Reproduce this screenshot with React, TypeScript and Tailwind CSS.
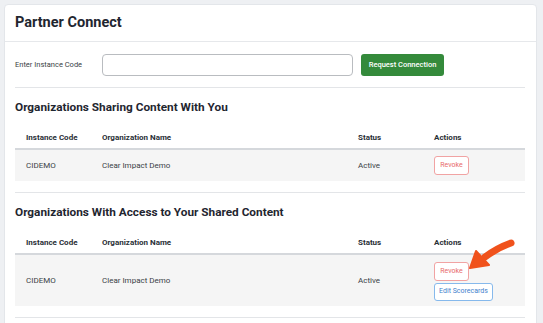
import React from "react";

type Row = { code: string; name: string; status: string };

const rows: Row[] = [{ code: "CIDEMO", name: "Clear Impact Demo", status: "Active" }];

function TableHead() {
  return (
    <div className="flex h-[23px] items-center border-b-2 border-[#d5d8dc] text-[8px] font-bold text-[#2a2f36]">
      <div className="w-[87px] pl-[11px]">Instance Code</div>
      <div className="w-[256px]">Organization Name</div>
      <div className="w-[76px]">Status</div>
      <div>Actions</div>
    </div>
  );
}

function RevokeButton() {
  return (
    <button className="flex h-[19px] w-[35px] items-center justify-center rounded-[3px] border border-[#f1a3a3] bg-white text-[7px] text-[#e86a6a]">
      Revoke
    </button>
  );
}

export default function App() {
  return (
    <div
      className="h-[323px] w-[543px] overflow-hidden bg-[#eef0f3] pl-[4px] pt-[4px]"
      style={{ fontFamily: "Roboto, 'Noto Sans', sans-serif" }}
    >
      <div className="relative h-[340px] w-[533px] rounded-[4px] border border-[#e3e6ea] bg-white">
        {/* Header */}
        <div className="flex h-[37px] items-center border-b border-[#e6e8eb] pl-[10px]">
          <h1 className="text-[14.5px] font-bold text-[#1f2630]">Partner Connect</h1>
        </div>

        <div className="pl-[10px] pr-[11px]">
          {/* Request connection */}
          <div className="flex h-[46px] items-center border-b border-[#e3e5e8]">
            <label className="w-[87px] text-[7.5px] text-[#3a3f46]">Enter Instance Code</label>
            <input className="h-[22px] w-[251px] rounded-[4px] border border-[#b9bcc0] bg-white" />
            <button className="ml-[8px] flex h-[22px] w-[83px] items-center justify-center rounded-[3px] bg-[#348a3b] text-[7.5px] font-medium text-white">
              Request Connection
            </button>
          </div>

          {/* Sharing with you */}
          <div className="flex h-[39px] items-center">
            <h2 className="text-[11.8px] font-bold text-[#1f2630]">Organizations Sharing Content With You</h2>
          </div>
          <TableHead />
          {rows.map((r) => (
            <div key={r.code} className="flex h-[31px] items-center bg-[#f5f5f5] text-[8px] text-[#3a3f46]">
              <div className="w-[87px] pl-[11px]">{r.code}</div>
              <div className="w-[256px]">{r.name}</div>
              <div className="w-[76px]">{r.status}</div>
              <RevokeButton />
            </div>
          ))}
          <div className="h-[12px] border-b border-[#e3e5e8]" />

          {/* Access to your content */}
          <div className="flex h-[39px] items-center">
            <h2 className="text-[11.8px] font-bold text-[#1f2630]">Organizations With Access to Your Shared Content</h2>
          </div>
          <TableHead />
          {rows.map((r) => (
            <div key={r.code} className="flex h-[51px] items-center bg-[#f5f5f5] text-[8px] text-[#3a3f46]">
              <div className="w-[87px] pl-[11px]">{r.code}</div>
              <div className="w-[256px]">{r.name}</div>
              <div className="w-[76px]">{r.status}</div>
              <div className="flex flex-col gap-[2px] pt-[1px]">
                <RevokeButton />
                <button className="flex h-[18px] w-[59px] items-center justify-center rounded-[3px] border border-[#86b9ec] bg-white text-[7px] text-[#3f7fcc]">
                  Edit Scorecards
                </button>
              </div>
            </div>
          ))}
          <div className="h-[12px] border-b border-[#e3e5e8]" />
        </div>

        {/* Annotation arrow */}
        <svg className="absolute left-[456px] top-[230px]" width="64" height="44" viewBox="0 0 64 44">
          <path d="M50 8 Q36 13 24 22" stroke="#f0521c" strokeWidth="7" strokeLinecap="round" fill="none" />
          <path d="M9 33 L15 16 L28 30 Z" fill="#f0521c" stroke="#f0521c" strokeWidth="2" strokeLinejoin="round" />
        </svg>
      </div>
    </div>
  );
}
